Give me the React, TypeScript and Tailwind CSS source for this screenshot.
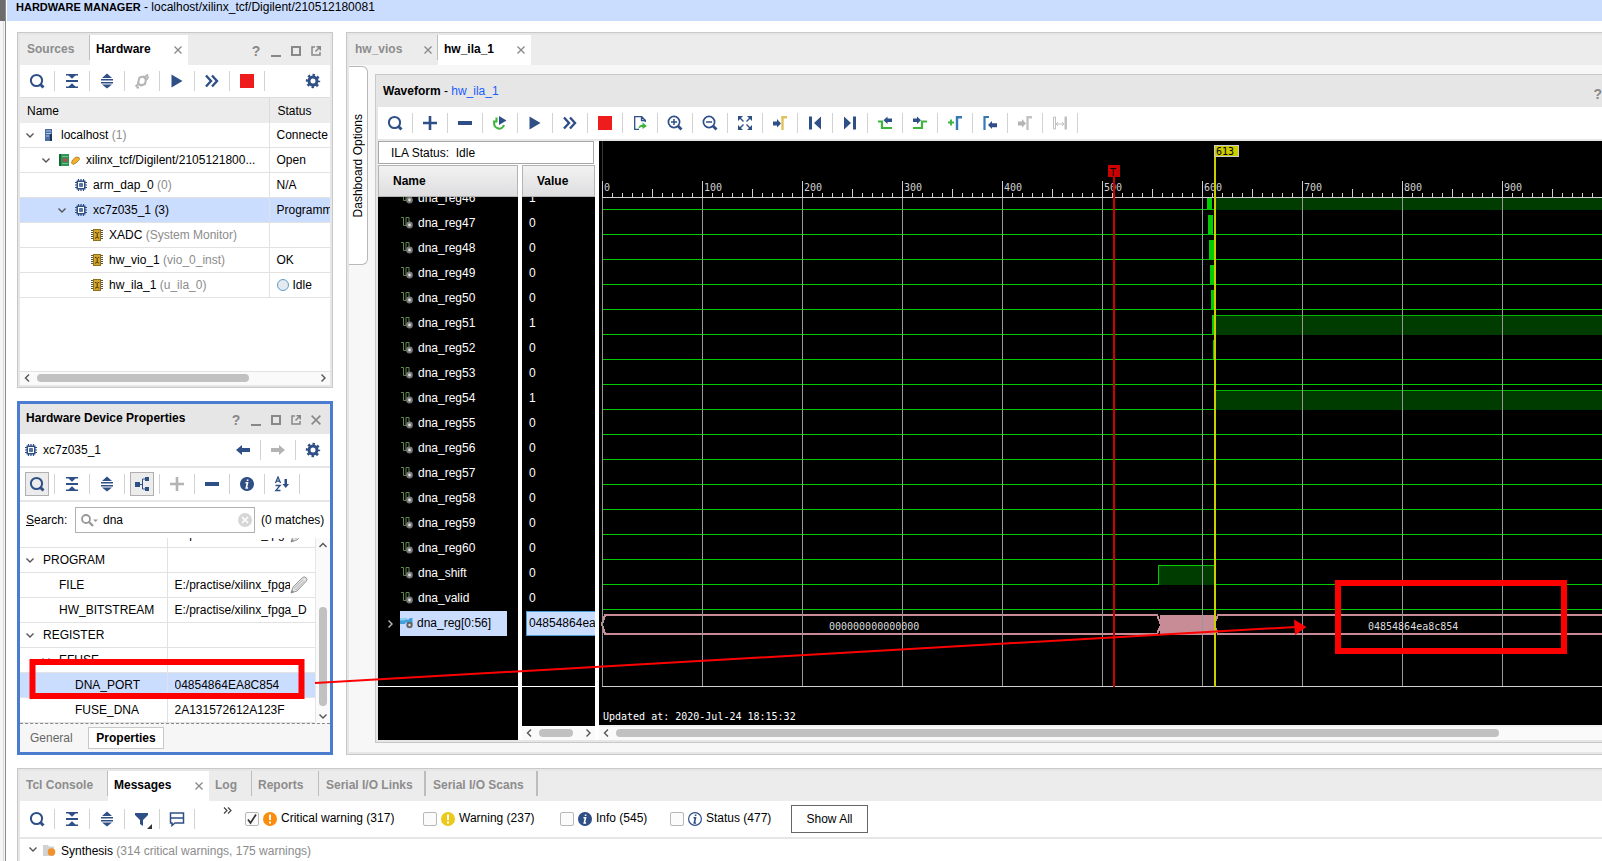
import { useState } from 'react';
import type { ReactNode } from 'react';
import clsx from 'clsx';

const NAVY = '#2f4f87';
const GRAY = '#b4b4b4';
const GREEN = '#3db53d';

/* ---------- icons ---------- */

function Svg({ children, size = 16 }: { children: ReactNode; size?: number }) {
  return (
    <svg width={size} height={size} viewBox="0 0 16 16" fill="none" className="shrink-0">
      {children}
    </svg>
  );
}

const SearchIcon = () => (
  <Svg>
    <circle cx="7.500" cy="7.500" r="5.600" stroke={NAVY} strokeWidth="2" />
    <path d="M11 11 14.500 14.500" stroke={NAVY} strokeWidth="3" />
  </Svg>
);

const CollapseIcon = () => (
  <Svg>
    <path d="M2 1h12v1.500H11.500L8 5.800 4.500 2.500H2zM2 7h12v2H2zM2 15h12v-1.500H11.500L8 10.200 4.500 13.500H2z" fill={NAVY} />
  </Svg>
);

const ExpandIcon = () => (
  <Svg>
    <path d="M8 .500l5 4.500H3zM2 6h12v1.500H2zM2 9h12v1.500H2zM3 11.500h10L8 15.500z" fill={NAVY} />
  </Svg>
);

const PlugIcon = () => (
  <Svg>
    <path d="M5.500 4.500 9.500 3.500l2.500 3-1 4.500-4 1.500-3-2.500zM11 4l3-2.500M12.500 6.500 14.500 3.500M4.500 11 1.500 13.500M2.500 14.500h2.500" stroke={GRAY} strokeWidth="2" />
  </Svg>
);

const PlayIcon = () => (
  <Svg>
    <path d="M2.500 1.500 13.500 8 2.500 14.500z" fill={NAVY} />
  </Svg>
);

const ForwardIcon = () => (
  <Svg>
    <path d="M2 2.500 7 8l-5 5.500M8 2.500 13 8l-5 5.500" stroke={NAVY} strokeWidth="2.400" />
  </Svg>
);

const StopIcon = () => (
  <Svg>
    <path d="M1 1h14v14H1z" fill="#ee1c1c" />
  </Svg>
);

const GearIcon = () => (
  <Svg>
    <circle cx="8" cy="8" r="4" stroke={NAVY} strokeWidth="3" />
    <circle cx="8" cy="8" r="6" stroke={NAVY} strokeWidth="2.400" strokeDasharray="2.400 2.312" strokeDashoffset="1.200" />
  </Svg>
);

const ArrowIcon = ({ color, flip }: { color: string; flip?: boolean }) => (
  <Svg>
    <path d={flip ? 'M15 8 9 3v3H1v4h8v3z' : 'M1 8l6-5v3h8v4H7v3z'} fill={color} />
  </Svg>
);

const TreeIcon = () => (
  <Svg>
    <path d="M1 6h5v5H1zM11 1h4v4h-4zM11 11h4v4h-4z" fill={NAVY} />
    <path d="M6 8.500h2.500M11 3H8.500v10H11" stroke={NAVY} />
  </Svg>
);

const PlusIcon = ({ color = NAVY }: { color?: string }) => (
  <Svg>
    <path d="M1 8h14M8 1v14" stroke={color} strokeWidth="2.600" />
  </Svg>
);

const MinusIcon = () => (
  <Svg>
    <path d="M1 6h14v4H1z" fill={NAVY} />
  </Svg>
);

const InfoIcon = ({ hollow }: { hollow?: boolean }) => (
  <Svg>
    <circle cx="8" cy="8" r="6.400" fill={hollow ? '#fff' : NAVY} stroke={NAVY} strokeWidth="1.200" />
    <path d="M6.500 6.800h2L7.300 12h1.800M8.600 3.500v1.600" stroke={hollow ? NAVY : '#fff'} strokeWidth="1.600" />
  </Svg>
);

const WarnIcon = ({ color }: { color: string }) => (
  <Svg>
    <circle cx="8" cy="8" r="7" fill={color} />
    <path d="M8 3.500v5.500M8 10.500v2" stroke="#fff" strokeWidth="2" />
  </Svg>
);

const SortIcon = () => (
  <Svg>
    <path d="M1.500 7 4 1l2.500 6M2.300 5.200h3.400M1.500 9.500h4.600L1.800 14.500h4.700" stroke={NAVY} strokeWidth="1.300" />
    <path d="M10.500 3h2.500v5h2l-3.250 4L8.500 8h2z" fill={NAVY} />
  </Svg>
);

const FilterIcon = () => (
  <svg width="20" height="20" viewBox="0 0 20 20" className="shrink-0">
    <path d="M3 4h13v2l-5 5v6l-3-2v-4L3 6z" fill={NAVY} />
    <path d="M20 15v5h-5z" fill="#333" />
  </svg>
);

const CommentIcon = () => (
  <Svg>
    <path d="M1.500 2h13v10H6l-3 2.500V12H1.500zM1.500 7h13" stroke={NAVY} strokeWidth="1.500" />
  </Svg>
);

const RerunIcon = () => (
  <Svg>
    <path d="M4.500 2.500V6.500H1M2.300 7a5 5 0 1 0 9.700 3" stroke={GREEN} strokeWidth="2.100" />
    <path d="M7 1l7.500 4.500L7 10z" fill={NAVY} />
  </Svg>
);

const ExportIcon = () => (
  <Svg>
    <path d="M7 14.300H2.700V1.700h7l3.600 3.600V7M9.500 2v3.500H13" stroke={NAVY} strokeWidth="1.300" />
    <path d="M6.500 14c0-3 1.500-4.200 4-4.200V7.500L15 11l-4.500 3v-2c-2 0-3 .500-4 2z" fill={GREEN} />
  </Svg>
);

const ZoomIcon = ({ plus }: { plus?: boolean }) => (
  <Svg>
    <circle cx="7" cy="7" r="5.600" stroke={NAVY} strokeWidth="1.700" />
    <path d={plus ? 'M4 7h6M7 4v6' : 'M4 7h6'} stroke={NAVY} strokeWidth="1.500" />
    <path d="M11 11l3.500 3.500" stroke={NAVY} strokeWidth="2.800" />
  </Svg>
);

const FitIcon = () => (
  <Svg>
    <path d="M1 1h5L1 6zM15 1v5l-5-5zM1 15v-5l5 5zM15 15h-5l5-5z" fill={NAVY} />
    <path d="M3 3l3.500 3.500M13 3 9.500 6.500M3 13l3.500-3.500M13 13 9.500 9.500" stroke={NAVY} strokeWidth="1.400" />
  </Svg>
);

const GotoIcon = ({ arrow, line }: { arrow: string; line: string }) => (
  <Svg>
    <path d="M1 6.500h4V4l4 4.500-4 4V10.500H1z" fill={arrow} />
    <path d="M10.500 15V2.200H15" stroke={line} strokeWidth="2.400" />
  </Svg>
);

const EdgeIcon = ({ last }: { last?: boolean }) => (
  <Svg>
    <path d={last ? 'M2 1.500 9 8l-7 6.500zM11 1.500h3v13h-3z' : 'M14 1.500 7 8l7 6.500zM2 1.500h3v13H2z'} fill={NAVY} />
  </Svg>
);

const TransitionIcon = ({ next }: { next?: boolean }) => (
  <Svg>
    <path d={next ? 'M1 13h9V6.500h5' : 'M1 6.500h4V13h10'} stroke={GREEN} strokeWidth="2.200" />
    <path d={next ? 'M9 5.200 5 1.500v2H1v3.500h4v2z' : 'M6.500 5.200 10.500 1.500v2H15v3.500h-4.500v2z'} fill={NAVY} />
  </Svg>
);

const AddMarkerIcon = () => (
  <Svg>
    <path d="M1 7.500h6M4 4.500v6" stroke={GREEN} strokeWidth="1.900" />
    <path d="M10 15V2.200h5" stroke="#3579b5" strokeWidth="2.400" />
  </Svg>
);

const PrevMarkerIcon = () => (
  <Svg>
    <path d="M2.500 15V2h4.500" stroke="#3579b5" strokeWidth="2.200" />
    <path d="M6 10l4-4v2.200h5v4h-5V14z" fill={NAVY} />
  </Svg>
);

const SwapIcon = () => (
  <Svg>
    <path d="M1.500 2v12h2V2zM4 9h8M6 7 4 9l2 2M10 7l2 2-2 2" stroke="#c0c0c0" />
    <path d="M12.500 1.500h2.500v13h-2.500z" fill="#c0c0c0" />
  </Svg>
);

const ChevronIcon = ({ dir, color = '#555' }: { dir: 'up' | 'down' | 'left' | 'right'; color?: string }) => {
  const d = {
    up: 'M1.500 7 5 3.500 8.500 7',
    down: 'M1.500 3.500 5 7l3.500-3.500',
    left: 'M7 1.500 3.500 5 7 8.500',
    right: 'M3.500 1.500 7 5 3.500 8.500',
  }[dir];
  return (
    <svg width="10" height="10" viewBox="0 0 10 10" fill="none" className="shrink-0">
      <path d={d} stroke={color} strokeWidth="1.400" />
    </svg>
  );
};

const ChipIcon = () => (
  <svg width="12" height="12" viewBox="0 0 12 12" fill="none" className="shrink-0">
    <path d="M3.500 0v12M6 0v12M8.500 0v12M0 3.500h12M0 6h12M0 8.500h12" stroke={NAVY} strokeWidth="1.200" />
    <rect x="2.250" y="2.250" width="7.500" height="7.500" fill="#fff" stroke={NAVY} strokeWidth="1.500" />
    <rect x="4.200" y="4.200" width="3.600" height="3.600" fill={NAVY} />
    <rect x="5.400" y="5.400" width="1.200" height="1.200" fill="#a9bbdc" />
  </svg>
);

const CoreIcon = () => (
  <svg width="12" height="12" viewBox="0 0 12 12" fill="none" className="shrink-0">
    <path d="M0 1.500h12M0 3.500h12M0 5.500h12M0 7.500h12M0 9.500h12" stroke="#555" />
    <rect x="2.500" y=".500" width="7" height="11" fill="#d3a52c" stroke="#8f7018" />
    <path d="M4 3.500h1.200l1 1 1-1h1M4 9h1.200l1-1 1 1h1M6.200 4.500v3.500" stroke="#4a3500" />
  </svg>
);

const ServerIcon = () => (
  <svg width="7" height="12" viewBox="0 0 7 12" className="shrink-0">
    <path d="M0 0h7v12H0z" fill="#4a6da3" />
    <path d="M1 2h5M1 4.500h5M1 7h3" stroke="#b4c9e8" />
    <path d="M5 5h2v7H5z" fill="#1d3358" />
  </svg>
);

const BoardIcon = () => (
  <svg width="21" height="12" viewBox="0 0 21 12" fill="none" className="shrink-0">
    <path d="M0 0h10v12H0z" fill="#2a9557" />
    <path d="M0 0h2v12H0z" fill="#17653a" />
    <path d="M3.500 2.500h5M3.500 9.500h5" stroke="#bfe8c9" strokeDasharray="1 1" />
    <path d="M4 4.500h4v3H4z" fill="#c44" />
    <path d="M12.500 9 13.500 6l3.500-3 3 .500.500 2-3.500 3.500-3 1.500z" fill="#f2b02c" stroke="#a87410" strokeWidth=".800" />
  </svg>
);

const SignalIcon = () => (
  <svg width="12" height="13" viewBox="0 0 12 13" fill="none" className="shrink-0">
    <path d="M0 1.500h2.500v8H5v-8h3v5" stroke="#5f8a4c" />
    <circle cx="8.500" cy="9" r="3.400" fill="#777" />
    <circle cx="8.500" cy="9" r="1.400" fill="#ddd" />
  </svg>
);

const BusIcon = () => (
  <svg width="13" height="13" viewBox="0 0 13 13" fill="none" className="shrink-0">
    <path d="M0 2h6l2 2 2-2h2.500v6H8L6 6 5 8H0z" fill="#3fa0dc" />
    <path d="M0 2h6l1 1.500-3 1H0z" fill="#8ccdf2" />
    <circle cx="9.500" cy="9" r="3.200" fill="#666" />
    <circle cx="9.500" cy="9" r="1.200" fill="#ddd" />
  </svg>
);

const PencilIcon = () => (
  <svg width="18" height="18" viewBox="0 0 18 18" fill="none" className="shrink-0">
    <path d="M1 17 3 11 12 2q2-2 4-.500t0 4L7 15z" fill="#e4e4e4" stroke="#999" />
    <path d="M4 12.500 13 3.500M5.500 14l9-9" stroke="#b0b0b0" />
    <path d="M1 17l1-3 2 2z" fill="#888" />
  </svg>
);

const FolderIcon = () => (
  <svg width="13" height="13" viewBox="0 0 13 13" className="shrink-0">
    <path d="M0 1h5l1 1.500h5V12H0z" fill="#d2d2d2" />
    <circle cx="8.500" cy="8" r="3.800" fill="#f0912a" />
  </svg>
);

const CloseIcon = ({ size = 8 }: { size?: number }) => (
  <svg width={size} height={size} viewBox="0 0 8 8" className="shrink-0">
    <path d="M.500.500l7 7M7.500.500l-7 7" stroke="#888" strokeWidth="1.300" />
  </svg>
);

/* ---------- shared pieces ---------- */

function ToolButton({ label, children, pressed }: { label: string; children: ReactNode; pressed?: boolean }) {
  return (
    <button
      type="button"
      aria-label={label}
      className="flex h-6 w-[34px] shrink-0 items-center justify-center"
    >
      <span className={clsx('flex size-6 items-center justify-center', pressed && 'border border-[#b0b0b0] bg-[#ececec]')}>
        {children}
      </span>
    </button>
  );
}

const Sep = () => <span className="h-5 w-px shrink-0 bg-[#d2d2d2]" />;

type Tool = { label: string; icon: ReactNode; pressed?: boolean };

function Tools({ items }: { items: Tool[] }) {
  return (
    <>
      {items.map((t) => (
        <div key={t.label} className="flex items-center">
          <ToolButton label={t.label} pressed={t.pressed}>
            {t.icon}
          </ToolButton>
          <Sep />
        </div>
      ))}
    </>
  );
}

function WindowButtons({ closable }: { closable?: boolean }) {
  return (
    <div className="ml-auto flex items-center pt-[2px] pr-1">
      <button type="button" aria-label="Help" className="w-5 text-sm leading-5 font-bold text-[#888]">
        ?
      </button>
      <button type="button" aria-label="Minimize" className="flex h-5 w-5 items-end justify-center pb-1">
        <span className="h-0.5 w-[10px] bg-[#888]" />
      </button>
      <button type="button" aria-label="Maximize" className="flex h-5 w-5 items-center justify-center">
        <span className="size-[10px] border-2 border-[#888]" />
      </button>
      <button type="button" aria-label="Float" className="flex h-5 w-5 items-center justify-center">
        <svg width="10" height="10" viewBox="0 0 10 10" fill="none">
          <path d="M4 1H1v8h8V6M4.500 5.500 9 1M5.500.700h3.800v3.800" stroke="#888" strokeWidth="1.500" />
        </svg>
      </button>
      {closable && (
        <button type="button" aria-label="Close" className="flex h-5 w-5 items-center justify-center">
          <CloseIcon size={10} />
        </button>
      )}
    </div>
  );
}

function HScroll({ children }: { children: ReactNode }) {
  return (
    <div className="flex h-[13px] shrink-0 items-center gap-[5px] bg-[#fafafa] px-[2px] pb-px">
      <ChevronIcon dir="left" />
      <div className="flex-1">{children}</div>
      <ChevronIcon dir="right" />
    </div>
  );
}

/* ---------- hardware tree ---------- */

const HARDWARE = [
  { pad: 'pl-[5px]', open: true, icon: <ServerIcon />, gap: 'gap-[8px]', name: 'localhost', note: '(1)', status: 'Connecte' },
  { pad: 'pl-[21px]', open: true, icon: <BoardIcon />, gap: 'gap-[6px]', name: 'xilinx_tcf/Digilent/2105121800...', note: '', status: 'Open' },
  { pad: 'pl-[55px]', open: false, icon: <ChipIcon />, gap: 'gap-[6px]', name: 'arm_dap_0', note: '(0)', status: 'N/A' },
  { pad: 'pl-[37px]', open: true, icon: <ChipIcon />, gap: 'gap-[6px]', name: 'xc7z035_1 (3)', note: '', status: 'Programmed', selected: true },
  { pad: 'pl-[71px]', open: false, icon: <CoreIcon />, gap: 'gap-[6px]', name: 'XADC', note: '(System Monitor)', status: '' },
  { pad: 'pl-[71px]', open: false, icon: <CoreIcon />, gap: 'gap-[6px]', name: 'hw_vio_1', note: '(vio_0_inst)', status: 'OK' },
  { pad: 'pl-[71px]', open: false, icon: <CoreIcon />, gap: 'gap-[6px]', name: 'hw_ila_1', note: '(u_ila_0)', status: 'Idle', dot: true },
];

function HardwarePanel() {
  return (
    <section className="flex flex-1 flex-col border border-[#c8c8c8]">
      <div className="flex flex-1 flex-col border-2 border-[#e6e6e6] bg-white">
        <div className="flex h-[30px] bg-[#ececec]">
          <button type="button" className="h-[25px] w-[70px] border-r border-[#bdbdbd] pt-[2px] pl-[7px] text-left font-bold text-[#8c8c8c]">
            Sources
          </button>
          <div className="flex w-[98px] items-center justify-between bg-white pr-[6px] pb-[2px] pl-[6px]">
            <button type="button" className="font-bold">Hardware</button>
            <button type="button" aria-label="Close Hardware" className="pt-[2px]"><CloseIcon /></button>
          </div>
          <WindowButtons />
        </div>
        <div className="flex h-8 items-center">
          <Tools
            items={[
              { label: 'Search', icon: <SearchIcon /> },
              { label: 'Collapse all', icon: <CollapseIcon /> },
              { label: 'Expand all', icon: <ExpandIcon /> },
              { label: 'Auto connect', icon: <PlugIcon /> },
              { label: 'Run trigger', icon: <PlayIcon /> },
              { label: 'Run immediate', icon: <ForwardIcon /> },
              { label: 'Stop trigger', icon: <StopIcon /> },
            ]}
          />
          <div className="ml-auto">
            <ToolButton label="Settings"><GearIcon /></ToolButton>
          </div>
        </div>
        <table className="w-full table-fixed border-t border-[#dedede]">
          <thead>
            <tr className="h-[25px] bg-[#ececec] text-left">
              <th className="p-0 pt-[2px] pl-[7px] font-normal">Name</th>
              <th className="w-[61px] border-l border-[#dcdcdc] p-0 pt-[2px] pl-[8px] font-normal">Status</th>
            </tr>
          </thead>
          <tbody>
            {HARDWARE.map((r) => (
              <tr key={r.name} className={clsx('h-[25px] border-b border-[#e2e2e2]', r.selected && 'bg-[#cbddff]')}>
                <td className="overflow-hidden p-0 whitespace-nowrap">
                  <div className={clsx('flex items-center', r.pad)}>
                    {r.open && <span className="mr-2 flex"><ChevronIcon dir="down" /></span>}
                    <div className={clsx('flex items-center', r.gap)}>
                      {r.name === 'localhost' ? <span className="flex w-[10px] justify-center">{r.icon}</span> : r.icon}
                      <span>
                        {r.name} <span className="text-[#8c8c8c]">{r.note}</span>
                      </span>
                    </div>
                  </div>
                </td>
                <td className="overflow-hidden border-l border-[#e2e2e2] p-0 pl-[7px] whitespace-nowrap">
                  <div className="flex items-center gap-1">
                    {r.dot && <span className="size-3 rounded-full border border-[#5a9fcf] bg-[#e4eaee]" />}
                    {r.status}
                  </div>
                </td>
              </tr>
            ))}
          </tbody>
        </table>
        <div className="flex-1" />
        <div className="border-t border-[#e2e2e2]">
          <HScroll>
            <div className="h-2 w-[212px] rounded-full bg-[#c1c1c1]" />
          </HScroll>
        </div>
      </div>
    </section>
  );
}

/* ---------- device properties ---------- */

const PROPERTIES = [
  { key: 'top-file', pad: 'pl-[39px]', name: 'FILE', value: 'E:/practise/xilinx_fpga', edit: true },
  { key: 'program', pad: 'pl-[5px]', open: true, name: 'PROGRAM', value: '' },
  { key: 'file', pad: 'pl-[39px]', name: 'FILE', value: 'E:/practise/xilinx_fpga', edit: true },
  { key: 'bitstream', pad: 'pl-[39px]', name: 'HW_BITSTREAM', value: 'E:/practise/xilinx_fpga_D' },
  { key: 'register', pad: 'pl-[5px]', open: true, name: 'REGISTER', value: '' },
  { key: 'efuse', pad: 'pl-[21px]', open: true, name: 'EFUSE', value: '' },
  { key: 'dna', pad: 'pl-[55px]', name: 'DNA_PORT', value: '04854864EA8C854', selected: true },
  { key: 'fuse', pad: 'pl-[55px]', name: 'FUSE_DNA', value: '2A131572612A123F' },
];

function PropertiesPanel() {
  const [query, setQuery] = useState('dna');
  return (
    <section className="border-3 border-[#4a7dd0] bg-white">
      <div className="flex h-[30px] items-center bg-[#e6e6e6] pl-[6px]">
        <h2 className="pb-[2px] font-bold">Hardware Device Properties</h2>
        <WindowButtons closable />
      </div>
      <div className="flex h-8 items-center pl-[5px]">
        <ChipIcon />
        <span className="pl-[6px]">xc7z035_1</span>
        <div className="ml-auto flex items-center">
          <ToolButton label="Previous object"><ArrowIcon color={NAVY} /></ToolButton>
          <Sep />
          <ToolButton label="Next object"><ArrowIcon color={GRAY} flip /></ToolButton>
          <Sep />
          <ToolButton label="Settings"><GearIcon /></ToolButton>
        </div>
      </div>
      <div className="flex h-9 items-center border-y-2 border-[#e6e6e6]">
        <Tools
          items={[
            { label: 'Search', icon: <SearchIcon />, pressed: true },
            { label: 'Collapse all', icon: <CollapseIcon /> },
            { label: 'Expand all', icon: <ExpandIcon /> },
            { label: 'Group by hierarchy', icon: <TreeIcon />, pressed: true },
            { label: 'Add', icon: <PlusIcon color={GRAY} /> },
            { label: 'Remove', icon: <MinusIcon /> },
            { label: 'Info', icon: <InfoIcon /> },
            { label: 'Sort', icon: <SortIcon /> },
          ]}
        />
      </div>
      <div className="flex h-9 items-center pl-[6px]">
        <label htmlFor="prop-search" className="w-[49px]">
          <span className="underline">S</span>earch:
        </label>
        <div className="flex h-[26px] w-[180px] items-center border border-[#b0b0b0] pr-px pl-[5px]">
          <svg width="18" height="13" viewBox="0 0 18 13" fill="none" className="shrink-0">
            <circle cx="5" cy="5" r="4" stroke="#999" strokeWidth="1.800" />
            <path d="M8 8l4 4" stroke="#999" strokeWidth="2.400" />
            <path d="M12 5.500h5L14.500 8z" fill="#999" />
          </svg>
          <input
            id="prop-search"
            value={query}
            onChange={(e) => setQuery(e.target.value)}
            className="min-w-0 flex-1 pl-1 outline-none"
          />
          <button type="button" aria-label="Clear search" onClick={() => setQuery('')}>
            <Svg>
              <circle cx="8" cy="8" r="7" fill="#d6d6d6" />
              <path d="M5 5l6 6M11 5l-6 6" stroke="#fff" strokeWidth="1.600" />
            </Svg>
          </button>
        </div>
        <span className="pl-[6px] whitespace-nowrap">(0 matches)</span>
      </div>
      <div className="flex h-[185px] overflow-hidden">
        <div className="min-w-0 flex-1">
          <table className="-mt-4 w-full table-fixed">
            <tbody>
              {PROPERTIES.map((p) => (
                <tr key={p.key} className={clsx('h-[25px] border-b border-[#e2e2e2]', p.selected && 'bg-[#cbddff]')}>
                  <td className="w-[147px] overflow-hidden p-0 whitespace-nowrap">
                    <div className={clsx('flex items-center', p.pad)}>
                      {p.open && <span className="mr-2 flex"><ChevronIcon dir="down" /></span>}
                      {p.name}
                    </div>
                  </td>
                  <td className="overflow-hidden border-l border-[#e2e2e2] p-0 pl-[7px] whitespace-nowrap">
                    <div className="flex h-6 items-center">
                      <span className={clsx('overflow-hidden', p.edit && 'w-[115px]')}>{p.value}</span>
                      {p.edit && <PencilIcon />}
                    </div>
                  </td>
                </tr>
              ))}
            </tbody>
          </table>
        </div>
        <div className="flex w-[15px] flex-col items-center border-l border-[#e6e6e6] bg-[#fafafa] py-[2px]">
          <ChevronIcon dir="up" />
          <div className="flex flex-1 flex-col justify-end pb-[5px]">
            <div className="h-[99px] w-2 rounded-full bg-[#c1c1c1]" />
          </div>
          <ChevronIcon dir="down" />
        </div>
      </div>
      <div className="flex h-[29px] items-center border-t border-dashed border-[#888] bg-[#f6f6f6] pl-[10px]">
        <button type="button" className="w-[58px] text-left text-[#666]">General</button>
        <button type="button" className="h-[22px] w-[76px] border border-[#c8c8c8] bg-white font-bold">Properties</button>
      </div>
    </section>
  );
}

/* ---------- waveform ---------- */

const SIGNALS = [
  { name: 'dna_reg46', value: '1' },
  { name: 'dna_reg47', value: '0' },
  { name: 'dna_reg48', value: '0' },
  { name: 'dna_reg49', value: '0' },
  { name: 'dna_reg50', value: '0' },
  { name: 'dna_reg51', value: '1' },
  { name: 'dna_reg52', value: '0' },
  { name: 'dna_reg53', value: '0' },
  { name: 'dna_reg54', value: '1' },
  { name: 'dna_reg55', value: '0' },
  { name: 'dna_reg56', value: '0' },
  { name: 'dna_reg57', value: '0' },
  { name: 'dna_reg58', value: '0' },
  { name: 'dna_reg59', value: '0' },
  { name: 'dna_reg60', value: '0' },
  { name: 'dna_shift', value: '0' },
  { name: 'dna_valid', value: '0' },
];

const PX = 3; // x of sample 0
const AXIS = 56;
const BOTTOM = 545;
const END = 4000;
const TICKS = Array.from({ length: 200 }, (_, i) => i);
const PULSES = [608, 609, 610, 611, 612, 613, 614];

function Wave() {
  return (
    <svg className="block h-[584px] w-full bg-black font-['DejaVu_Sans_Mono',monospace] text-[10px]" shapeRendering="crispEdges">
      {/* digital signals, 25px apart */}
      {SIGNALS.map((s, i) => {
        const y = 68 + i * 25;
        const top = i === 0 ? AXIS : y - 19;
        const high = s.value === '1';
        return (
          <g key={s.name}>
            <rect x={PX} y={y} width={high ? 613 : END} height="1" fill="#00cc00" />
            {PULSES[i] && <rect x={PULSES[i]} y={top} width={Math.min(5, 615 - PULSES[i])} height={y - top + 1} fill="#00cc00" />}
            {high && <rect x="616" y={top} width={END} height={y - top + 1} fill="#003c00" />}
            {high && i > 0 && <rect x="616" y={top} width={END} height="1" fill="#00b400" />}
          </g>
        );
      })}
      <rect x="560" y="425" width="55" height="19" fill="#003c00" />
      <path d="M559.500 443.500v-19H615" fill="none" stroke="#00cc00" />

      {/* bus */}
      <g fill="none" stroke="#c88c96" strokeWidth="2">
        <path d="M3 483 6 474H558l4 10-4 9H6z" />
        <path d="M4000 474H619l-4 9 4 10H4000" />
      </g>
      <rect x="561" y="474" width="54" height="20" fill="#c88c96" />

      {/* grid and ruler */}
      <rect x={PX} y="0" width="1" height={AXIS} fill="#333" />
      {TICKS.map((t) => {
        const x = PX + t * 10;
        if (t % 10 === 0) {
          return (
            <g key={t}>
              <rect x={x} y="40" width="1" height="16" fill="#d0d0d0" />
              <rect x={x} y={AXIS} width="1" height={BOTTOM - AXIS} fill="#989898" />
              <text x={x + 2} y="50" fill="#d0d0d0">{t * 10}</text>
            </g>
          );
        }
        const h = t % 5 === 0 ? 8 : 4;
        return <rect key={t} x={x} y={AXIS - h} width="1" height={h} fill="#d0d0d0" />;
      })}
      <rect x={PX} y={AXIS} width={END} height="1" fill="#d0d0d0" />
      <rect x={PX} y={BOTTOM} width={END} height="1" fill="#d0d0d0" />
      <text x="230" y="489" fill="#ddd">000000000000000</text>
      <text x="769" y="489" fill="#ddd">04854864ea8c854</text>
      <text x="4" y="579" fill="#fff">Updated at: 2020-Jul-24 18:15:32</text>

      {/* trigger and cursor */}
      <rect x="514" y="24" width="2" height="522" fill="#cc0000" />
      <rect x="509" y="24" width="12" height="12" fill="#cc0000" />
      <text x="511" y="35" fill="#000">T</text>
      <rect x="615" y="4" width="2" height="542" fill="#cccc00" />
      <rect x="615.500" y="4.500" width="24" height="11" fill="#cccc00" stroke="#ccc" />
      <text x="617" y="14" fill="#000">613</text>
    </svg>
  );
}

const WAVE_TOOLS: Tool[] = [
  { label: 'Find', icon: <SearchIcon /> },
  { label: 'Add probes', icon: <PlusIcon /> },
  { label: 'Remove probes', icon: <MinusIcon /> },
  { label: 'Auto re-trigger', icon: <RerunIcon /> },
  { label: 'Run trigger', icon: <PlayIcon /> },
  { label: 'Run trigger immediate', icon: <ForwardIcon /> },
  { label: 'Stop', icon: <StopIcon /> },
  { label: 'Export data', icon: <ExportIcon /> },
  { label: 'Zoom in', icon: <ZoomIcon plus /> },
  { label: 'Zoom out', icon: <ZoomIcon /> },
  { label: 'Zoom fit', icon: <FitIcon /> },
  { label: 'Go to cursor', icon: <GotoIcon arrow={NAVY} line="#dfc35a" /> },
  { label: 'Go to start', icon: <EdgeIcon /> },
  { label: 'Go to end', icon: <EdgeIcon last /> },
  { label: 'Previous transition', icon: <TransitionIcon /> },
  { label: 'Next transition', icon: <TransitionIcon next /> },
  { label: 'Add marker', icon: <AddMarkerIcon /> },
  { label: 'Previous marker', icon: <PrevMarkerIcon /> },
  { label: 'Next marker', icon: <GotoIcon arrow={GRAY} line="#c4c4c4" /> },
  { label: 'Swap cursors', icon: <SwapIcon /> },
];

const columnHead = 'h-8 border border-[#b4b4b4] bg-linear-to-b from-[#f2f2f2] to-[#dedee0] text-left font-bold';

function WaveformPanel() {
  return (
    <section className="min-w-0 flex-1 border-y border-l border-[#c8c8c8]">
      <div className="border-y-2 border-l-2 border-[#e6e6e6] bg-white">
        <div className="flex h-[30px] items-center justify-between bg-[#e6e6e6] pl-[5px]">
          <h2 className="pb-[2px] font-bold">
            Waveform <span className="font-normal">- <a href="#hw_ila_1" className="text-[#1a5cff]">hw_ila_1</a></span>
          </h2>
          <button type="button" aria-label="Help" className="pt-1 text-sm leading-5 font-bold text-[#888]">?</button>
        </div>
        <div className="flex h-8 items-center overflow-hidden">
          <Tools items={WAVE_TOOLS} />
        </div>
        <div className="flex border-t-2 border-[#e6e6e6]">
          <div className="w-[217px] shrink-0">
            <div className="mb-px flex h-[23px] w-[216px] items-center border border-[#a8a8a8] pl-3 whitespace-pre">ILA Status:  Idle</div>
            <div className="flex gap-1">
              <div className="flex w-[140px] flex-col">
                <button type="button" className={clsx(columnHead, 'pl-[14px]')}>Name</button>
                <div className="flex h-[543px] flex-col overflow-hidden bg-black text-white">
                  <ul className="-mt-[11px] h-[501px] shrink-0 border-b border-white">
                    {SIGNALS.map((s) => (
                      <li key={s.name} className="flex h-[25px] items-center gap-[5px] pb-[2px] pl-[23px]">
                        <SignalIcon />
                        {s.name}
                      </li>
                    ))}
                    <li className="flex h-[25px] items-center gap-[5px] pl-[7px]">
                      <ChevronIcon dir="right" color="#bbb" />
                      <span className="flex h-[25px] w-[107px] items-center gap-[4px] bg-[#cbddff] pb-[2px] text-black">
                        <BusIcon />
                        dna_reg[0:56]
                      </span>
                    </li>
                  </ul>
                </div>
              </div>
              <div className="flex w-[73px] flex-col">
                <button type="button" className={clsx(columnHead, 'pl-[14px]')}>Value</button>
                <div className="flex h-[529px] flex-col overflow-hidden bg-black text-white">
                  <ul className="-mt-[11px] h-[501px] shrink-0 border-b border-white">
                    {SIGNALS.map((s) => (
                      <li key={s.name} className="flex h-[25px] items-center pb-[2px] pl-[7px]">{s.value}</li>
                    ))}
                    <li className="ml-1 flex h-[25px] items-center overflow-hidden border border-r-0 border-[#4a9ad8] bg-[#cbddff] pb-[2px] pl-[2px] text-black">
                      04854864ea8c854
                    </li>
                  </ul>
                </div>
                <div className="pt-px">
                  <HScroll>
                    <div className="h-2 w-[34px] rounded-full bg-[#c1c1c1]" />
                  </HScroll>
                </div>
              </div>
            </div>
          </div>
          <div className="ml-1 min-w-0 flex-1">
            <Wave />
            <div className="border-t-2 border-[#f0f0f0]">
              <div className="flex h-[13px] items-center gap-[5px] bg-[#fafafa] pr-[103px] pb-[2px] pl-[2px]">
                <ChevronIcon dir="left" />
                <div className="h-2 flex-1 rounded-full bg-[#c1c1c1]" />
              </div>
            </div>
          </div>
        </div>
      </div>
    </section>
  );
}

function DashboardPanel() {
  return (
    <section className="min-w-0 flex-1 border-y border-l border-[#c8c8c8]">
      <div className="border-y-2 border-l-2 border-[#e6e6e6] bg-[#f7f7f7]">
        <div className="flex h-[30px] bg-[#ececec]">
          <div className="flex h-[25px] w-[89px] items-center justify-between border-r border-[#bdbdbd] pt-[2px] pr-[5px] pl-[6px]">
            <button type="button" className="font-bold text-[#8c8c8c]">hw_vios</button>
            <button type="button" aria-label="Close hw_vios" className="pt-[2px]"><CloseIcon /></button>
          </div>
          <div className="flex w-[93px] items-center justify-between bg-white pr-[6px] pb-[2px] pl-[6px]">
            <button type="button" className="font-bold">hw_ila_1</button>
            <button type="button" aria-label="Close hw_ila_1" className="pt-[2px]"><CloseIcon /></button>
          </div>
        </div>
        <div className="flex items-start gap-[7px]">
          <button
            type="button"
            className="mt-px flex h-[199px] w-[19px] shrink-0 items-center justify-center rounded-r-md border border-l-0 border-[#b8b8b8] bg-white"
          >
            <span className="rotate-180 whitespace-nowrap [writing-mode:vertical-rl]">Dashboard Options</span>
          </button>
          <div className="flex min-w-0 flex-1 py-[9px]">
            <WaveformPanel />
          </div>
        </div>
      </div>
    </section>
  );
}

/* ---------- messages ---------- */

const MESSAGE_TABS = [
  { name: 'Log', cls: 'w-[43px] border-r pl-[6px]' },
  { name: 'Reports', cls: 'w-[67px] border-r pl-[6px]' },
  { name: 'Serial I/O Links', cls: 'w-[107px] border-r-2 pl-[7px]' },
  { name: 'Serial I/O Scans', cls: 'w-[112px] border-r-2 pl-[7px]' },
];

const FILTERS = [
  { id: 'critical', label: 'Critical warning (317)', icon: <WarnIcon color="#fb8c0c" />, checked: true, width: 'w-[178px]' },
  { id: 'warning', label: 'Warning (237)', icon: <WarnIcon color="#ebc81a" />, checked: false, width: 'w-[137px]' },
  { id: 'info', label: 'Info (545)', icon: <InfoIcon />, checked: false, width: 'w-[110px]' },
  { id: 'status', label: 'Status (477)', icon: <InfoIcon hollow />, checked: false, width: 'w-[121px]' },
];

function MessagesPanel() {
  return (
    <section className="mt-[13px] flex flex-1 flex-col border-t border-l border-[#c8c8c8]">
      <div className="flex-1 border-t-2 border-l-2 border-[#e6e6e6] bg-white">
        <div className="flex h-[30px] bg-[#ececec]">
          <button type="button" className="h-[25px] w-[88px] border-r border-[#bdbdbd] pt-[2px] pl-[6px] text-left font-bold text-[#8c8c8c]">
            Tcl Console
          </button>
          <div className="flex w-[101px] items-center justify-between bg-white pr-[6px] pb-[2px] pl-[6px]">
            <button type="button" className="font-bold">Messages</button>
            <button type="button" aria-label="Close Messages" className="pt-[2px]"><CloseIcon /></button>
          </div>
          {MESSAGE_TABS.map((t) => (
            <button
              key={t.name}
              type="button"
              className={clsx('h-[25px] border-[#bdbdbd] pt-[2px] text-left font-bold whitespace-nowrap text-[#8c8c8c]', t.cls)}
            >
              {t.name}
            </button>
          ))}
        </div>
        <div className="flex h-[38px] items-center border-b-2 border-[#e6e6e6]">
          <Tools
            items={[
              { label: 'Search', icon: <SearchIcon /> },
              { label: 'Collapse all', icon: <CollapseIcon /> },
              { label: 'Expand all', icon: <ExpandIcon /> },
              { label: 'Filter', icon: <FilterIcon /> },
              { label: 'Group', icon: <CommentIcon /> },
            ]}
          />
          <button type="button" aria-label="More tools" className="mr-[13px] ml-7 self-start pt-[6px]">
            <svg width="9" height="7" viewBox="0 0 9 7" fill="none">
              <path d="M1 .500 4 3.500 1 6.500M5 .500 8 3.500 5 6.500" stroke="#444" strokeWidth="1.200" />
            </svg>
          </button>
          {FILTERS.map((f) => (
            <label key={f.id} htmlFor={f.id} className={clsx('flex items-center gap-[3px] whitespace-nowrap', f.width)}>
              <span className="relative flex">
                <input
                  id={f.id}
                  type="checkbox"
                  defaultChecked={f.checked}
                  className="peer size-[14px] appearance-none rounded-xs border border-[#b8b8b8] bg-[#fbfbfb]"
                />
                <svg width="14" height="14" viewBox="0 0 14 14" fill="none" className="pointer-events-none absolute inset-0 hidden peer-checked:block">
                  <path d="M3 7.500 5.500 11 11 2.500" stroke="#333" strokeWidth="1.700" />
                </svg>
              </span>
              {f.icon}
              <span className="pb-[2px]">{f.label}</span>
            </label>
          ))}
          <button type="button" className="h-7 w-[77px] border border-[#666]">Show All</button>
        </div>
        <div className="flex h-6 items-center pl-2">
          <span className="pb-1"><ChevronIcon dir="down" /></span>
          <span className="mr-[5px] ml-[5px] pb-[2px]"><FolderIcon /></span>
          <span>
            Synthesis <span className="text-[#8c8c8c]">(314 critical warnings, 175 warnings)</span>
          </span>
        </div>
      </div>
    </section>
  );
}

/* red callouts linking the DNA_PORT value to the captured bus */
function Callouts() {
  return (
    <svg className="pointer-events-none absolute inset-0 size-full" fill="none">
      <rect x="32.500" y="662" width="269" height="34" stroke="#f00" strokeWidth="6" />
      <rect x="1338" y="583" width="226" height="68" stroke="#f00" strokeWidth="6" />
      <path d="M315 683 1296 627" stroke="#f00" strokeWidth="2" />
      <path d="M1294 619.500 1306.500 627 1295 635z" fill="#f00" />
    </svg>
  );
}

export default function App() {
  return (
    <div className="relative flex h-screen overflow-hidden bg-white font-['Liberation_Sans',Arial,sans-serif] text-xs text-black">
      <div className="flex w-[6px] shrink-0 flex-col border-r border-[#8c8c8c] bg-[#f6f6f6]">
        <div className="h-[21px] w-full bg-[#6c6c6c]" />
        <div className="w-1 flex-1 border-r border-[#dcdcdc]" />
      </div>
      <div className="flex min-w-0 flex-1 flex-col">
        <header className="ml-px h-[21px] shrink-0 bg-[#cbddff] pl-[9px] leading-[14px] whitespace-nowrap">
          <h1 className="inline text-[11px] font-bold">HARDWARE MANAGER</h1> - localhost/xilinx_tcf/Digilent/210512180081
        </header>
        <main className="flex flex-1 flex-col pt-[11px] pl-[11px]">
          <div className="flex gap-[13px]">
            <div className="flex w-[316px] shrink-0 flex-col gap-[13px]">
              <HardwarePanel />
              <PropertiesPanel />
            </div>
            <DashboardPanel />
          </div>
          <MessagesPanel />
        </main>
      </div>
      <Callouts />
    </div>
  );
}
